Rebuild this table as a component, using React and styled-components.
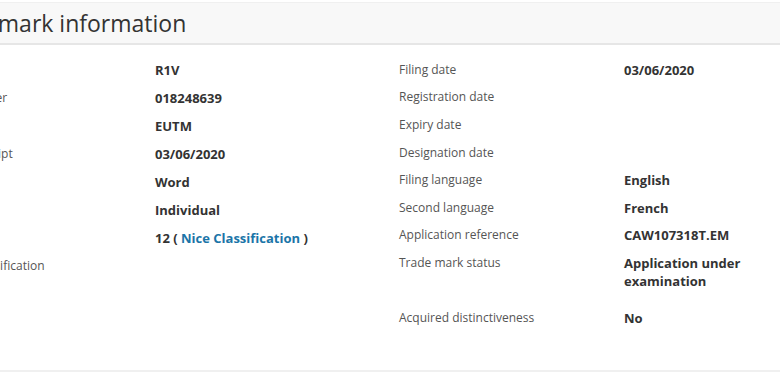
import React from 'react';
import styled, { createGlobalStyle } from 'styled-components';

const GlobalStyle = createGlobalStyle`
    body {
        margin: 0;
        background: #fff;
        font-family: "Open Sans", "Noto Sans", sans-serif;
        overflow: hidden;
    }
`;

const Panel = styled.section`
    margin-left: -70px;
    width: 920px;
    padding-top: 2px;
    border-bottom: 2px solid #f0f0f0;
`;

const Header = styled.div`
    height: 40px;
    border-top: 1px solid #f0f0f0;
    border-bottom: 2px solid #e6e6e6;
    background: #f8f8f8;
    padding-left: 0;
`;

const Title = styled.h2`
    margin: 0;
    font-size: 23px;
    font-weight: 400;
    line-height: 40px;
    color: #333;
`;

const Body = styled.div`
    display: grid;
    grid-template-columns: 469px 1fr;
    padding: 11px 0 38px;
`;

const Column = styled.dl`
    margin: 0;
    display: flex;
    flex-direction: column;
`;

const Row = styled.div`
    display: grid;
    grid-template-columns: 225px 1fr;
    align-items: start;
    padding-top: ${p => (p.$tight ? '4.8px' : '5px')};
    padding-bottom: ${p => (p.$extra ? '14px' : p.$tight ? '4.8px' : '5px')};
`;

const Label = styled.dt`
    font-size: 12px;
    line-height: 18px;
    color: #555;
`;

const Value = styled.dd`
    margin: 0;
    font-size: 13px;
    font-weight: 700;
    line-height: 18px;
    color: #333;
    max-width: ${p => (p.$narrow ? '150px' : 'none')};
`;

const Link = styled.a`
    color: #1b75a8;
    text-decoration: none;
`;

const left = [
    ['Name', 'R1V'],
    ['Filing number', '018248639'],
    ['Basis', 'EUTM'],
    ['Date of receipt', '03/06/2020'],
    ['Type', 'Word'],
    ['Nature', 'Individual'],
    ['Nice classes', <>12 ( <Link href="#">Nice Classification</Link> )</>],
    ['Vienna Classification', ''],
];

const right = [
    ['Filing date', '03/06/2020'],
    ['Registration date', ''],
    ['Expiry date', ''],
    ['Designation date', ''],
    ['Filing language', 'English'],
    ['Second language', 'French'],
    ['Application reference', 'CAW107318T.EM'],
    ['Trade mark status', 'Application under examination', true],
    ['Acquired distinctiveness', 'No'],
];

export default function App() {
    return (
        <>
            <GlobalStyle />
            <Panel>
                <Header>
                    <Title>Trade mark information</Title>
                </Header>
                <Body>
                    <Column>
                        {left.map(([label, value]) => (
                            <Row key={label}>
                                <Label>{label}</Label>
                                <Value>{value}</Value>
                            </Row>
                        ))}
                    </Column>
                    <Column>
                        {right.map(([label, value, wrap]) => (
                            <Row key={label} $tight $extra={wrap}>
                                <Label>{label}</Label>
                                <Value $narrow={wrap}>{value}</Value>
                            </Row>
                        ))}
                    </Column>
                </Body>
            </Panel>
        </>
    );
}
